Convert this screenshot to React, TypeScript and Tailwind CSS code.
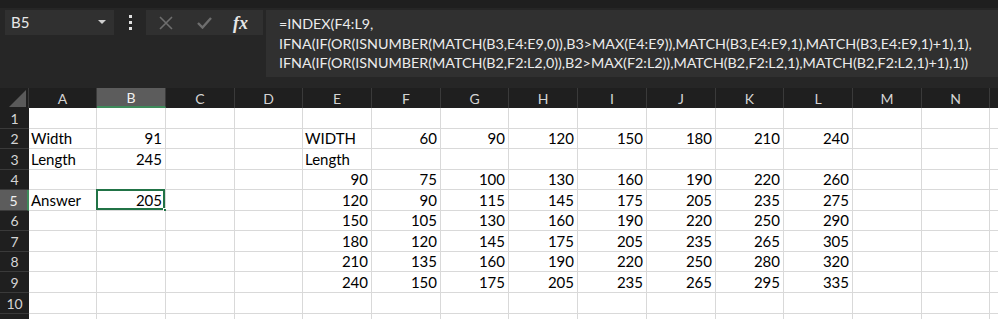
import { Fragment } from "react";

const cols = ["A", "B", "C", "D", "E", "F", "G", "H", "I", "J", "K", "L", "M", "N"];
const colWidths = "29px 68px 69px 69px 68px 69px 69px 68px 69px 69px 69px 68px 69px 69px 68px 1fr";
const rowHeights = [21, 20, 21, 20, 21, 20, 21, 20, 21, 21, 10];

type Cell = string | number | null;

// row index -> cells A..N
const data: Cell[][] = [
    [],
    ["Width", 91, null, null, "WIDTH", 60, 90, 120, 150, 180, 210, 240],
    ["Length", 245, null, null, "Length"],
    [null, null, null, null, 90, 75, 100, 130, 160, 190, 220, 260],
    ["Answer", 205, null, null, 120, 90, 115, 145, 175, 205, 235, 275],
    [null, null, null, null, 150, 105, 130, 160, 190, 220, 250, 290],
    [null, null, null, null, 180, 120, 145, 175, 205, 235, 265, 305],
    [null, null, null, null, 210, 135, 160, 190, 220, 250, 280, 320],
    [null, null, null, null, 240, 150, 175, 205, 235, 265, 295, 335],
    [],
    [],
];

const formula = [
    "=INDEX(F4:L9,",
    "IFNA(IF(OR(ISNUMBER(MATCH(B3,E4:E9,0)),B3>MAX(E4:E9)),MATCH(B3,E4:E9,1),MATCH(B3,E4:E9,1)+1),1),",
    "IFNA(IF(OR(ISNUMBER(MATCH(B2,F2:L2,0)),B2>MAX(F2:L2)),MATCH(B2,F2:L2,1),MATCH(B2,F2:L2,1)+1),1))",
];

export default function App() {
    return (
        <div className="w-[998px] h-[319px] overflow-hidden bg-[#262626] font-['Lato',sans-serif] flex flex-col">
            <div className="h-[8px] bg-[#1f1f1f] shrink-0" />
            {/* formula bar */}
            <div className="flex items-start pt-[2px] h-[80px] shrink-0">
                <div className="ml-[5px] w-[109px] h-[25px] bg-[#303030] flex items-center justify-between pl-[6px] pr-[8px] text-[15px] text-[#e8e8e8]">
                    <span>B5</span>
                    <svg width="8" height="5" viewBox="0 0 8 5"><path d="M0 0h8L4 4z" fill="#d0d0d0" /></svg>
                </div>
                <div className="w-[32px] h-[25px] flex flex-col items-center justify-center gap-[3px]">
                    <span className="w-[3px] h-[3px] bg-[#e0e0e0]" />
                    <span className="w-[3px] h-[3px] bg-[#e0e0e0]" />
                    <span className="w-[3px] h-[3px] bg-[#e0e0e0]" />
                </div>
                <div className="w-[117px] h-[25px] bg-[#303030] flex items-center">
                    <svg className="ml-[13px]" width="14" height="14" viewBox="0 0 14 14">
                        <path d="M1 1l12 12M13 1L1 13" stroke="#6e6e6e" strokeWidth="1.6" />
                    </svg>
                    <svg className="ml-[24px]" width="15" height="12" viewBox="0 0 15 12">
                        <path d="M1 6l4.5 4.5L14 1" stroke="#6e6e6e" strokeWidth="2.4" fill="none" />
                    </svg>
                    <span className="ml-[21px] font-['Liberation_Serif',serif] italic font-bold text-[18px] text-[#e6e6e6] leading-none">fx</span>
                </div>
                <div className="ml-[3px] flex-1 h-[67px] bg-[#303030] pl-[13px] pt-[4px] text-[14.3px] leading-[19.5px] text-[#ececec] whitespace-nowrap">
                    {formula.map(l => <div key={l}>{l}</div>)}
                </div>
            </div>
            {/* sheet */}
            <div
                className="grid text-[15px]"
                style={{ gridTemplateColumns: colWidths, gridTemplateRows: `20px ${rowHeights.map(h => h + "px").join(" ")}` }}
            >
                <div className="bg-[#1f1f1f] border-r border-[#3a3a3a] flex items-end justify-end pr-[2px] pb-[1px]">
                    <svg width="17" height="17" viewBox="0 0 17 17"><path d="M17 0v17H0z" fill="#5a5a5a" /></svg>
                </div>
                {cols.map((c, i) => (
                    <div key={c}
                        className={`flex items-center justify-center text-[14px] border-r border-[#3a3a3a] ${i === 1 ? "bg-[#5c5c5c] text-[#f0f0f0] border-b-2 border-b-[#3e8a5a]" : "bg-[#1f1f1f] text-[#d4d4d4]"}`}>
                        {c}
                    </div>
                ))}
                <div className="bg-[#1f1f1f]" />
                {rowHeights.map((_, r) => (
                    <Fragment key={r}>
                        <div className={`flex items-center justify-center text-[14px] border-b border-[#3a3a3a] ${r === 4 ? "bg-[#5c5c5c] text-[#f0f0f0] border-r-2 border-r-[#3e8a5a]" : "bg-[#1f1f1f] text-[#d4d4d4]"}`}>
                            {r < 10 ? r + 1 : ""}
                        </div>
                        {cols.map((_, c) => {
                            const v = data[r]?.[c] ?? null;
                            const selected = r === 4 && c === 1;
                            return (
                                <div key={c}
                                    className={`relative bg-white border-r border-b border-[#d9d9d9] flex items-center text-black ${typeof v === "number" ? "justify-end pr-[3px]" : "pl-[2px]"}`}>
                                    {v}
                                    {selected && (
                                        <>
                                            <div className="absolute -left-px -top-px right-0 bottom-0 border-2 border-[#217346]" />
                                            <div className="absolute -right-[3px] -bottom-[3px] w-[5px] h-[5px] bg-[#217346] border border-white" />
                                        </>
                                    )}
                                </div>
                            );
                        })}
                        <div className="bg-white border-b border-[#d9d9d9]" />
                    </Fragment>
                ))}
            </div>
        </div>
    );
}
